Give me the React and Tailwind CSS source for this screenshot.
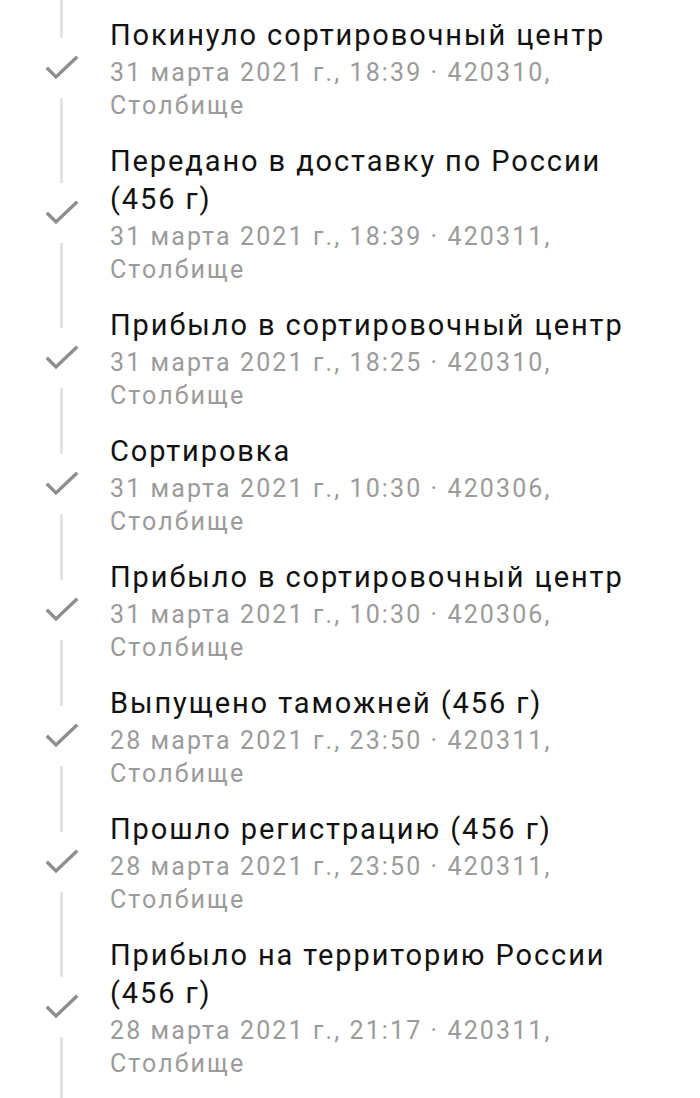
import React from 'react';

const events = [
  { title: 'Покинуло сортировочный центр', meta: '31 марта 2021 г., 18:39 · 420310, Столбище' },
  { title: 'Передано в доставку по России (456 г)', meta: '31 марта 2021 г., 18:39 · 420311, Столбище' },
  { title: 'Прибыло в сортировочный центр', meta: '31 марта 2021 г., 18:25 · 420310, Столбище' },
  { title: 'Сортировка', meta: '31 марта 2021 г., 10:30 · 420306, Столбище' },
  { title: 'Прибыло в сортировочный центр', meta: '31 марта 2021 г., 10:30 · 420306, Столбище' },
  { title: 'Выпущено таможней (456 г)', meta: '28 марта 2021 г., 23:50 · 420311, Столбище' },
  { title: 'Прошло регистрацию (456 г)', meta: '28 марта 2021 г., 23:50 · 420311, Столбище' },
  { title: 'Прибыло на территорию России (456 г)', meta: '28 марта 2021 г., 21:17 · 420311, Столбище' },
];

function Check() {
  return (
    <svg width="34" height="26" viewBox="0 0 34 26" fill="none">
      <path d="M3 14 L11 22 L31 3" stroke="#8e8e8e" strokeWidth="3.4" strokeLinecap="square" />
    </svg>
  );
}

function TrackItem({ title, meta }) {
  return (
    <div className="flex">
      <div className="w-[110px] shrink-0 flex flex-col items-center pl-[13px]">
        <div className="w-[3px] flex-1 bg-[#e3e3e3]" />
        <div className="my-[17px]">
          <Check />
        </div>
        <div className="w-[3px] flex-1 bg-[#e3e3e3]" />
      </div>
      <div className="flex-1 pr-[60px] pt-[10.5px] pb-[9.5px]">
        <div className="text-[29px] leading-[38px] text-[#111111] tracking-[1.9px]">{title}</div>
        <div className="mt-[2px] text-[25px] leading-[33px] text-[#9b9b9b] tracking-[2.1px]">{meta}</div>
      </div>
    </div>
  );
}

function LineStub({ h }) {
  return (
    <div className="w-[110px] flex justify-center pl-[13px]">
      <div className={`w-[3px] bg-[#e3e3e3] ${h}`} />
    </div>
  );
}

export default function App() {
  return (
    <div className="w-[700px] h-[1098px] overflow-hidden bg-white" style={{ fontFamily: 'Roboto, "Noto Sans", sans-serif' }}>
      <LineStub h="h-[5px]" />
      {events.map((e, i) => (
        <TrackItem key={i} title={e.title} meta={e.meta} />
      ))}
      <LineStub h="h-[40px]" />
    </div>
  );
}
